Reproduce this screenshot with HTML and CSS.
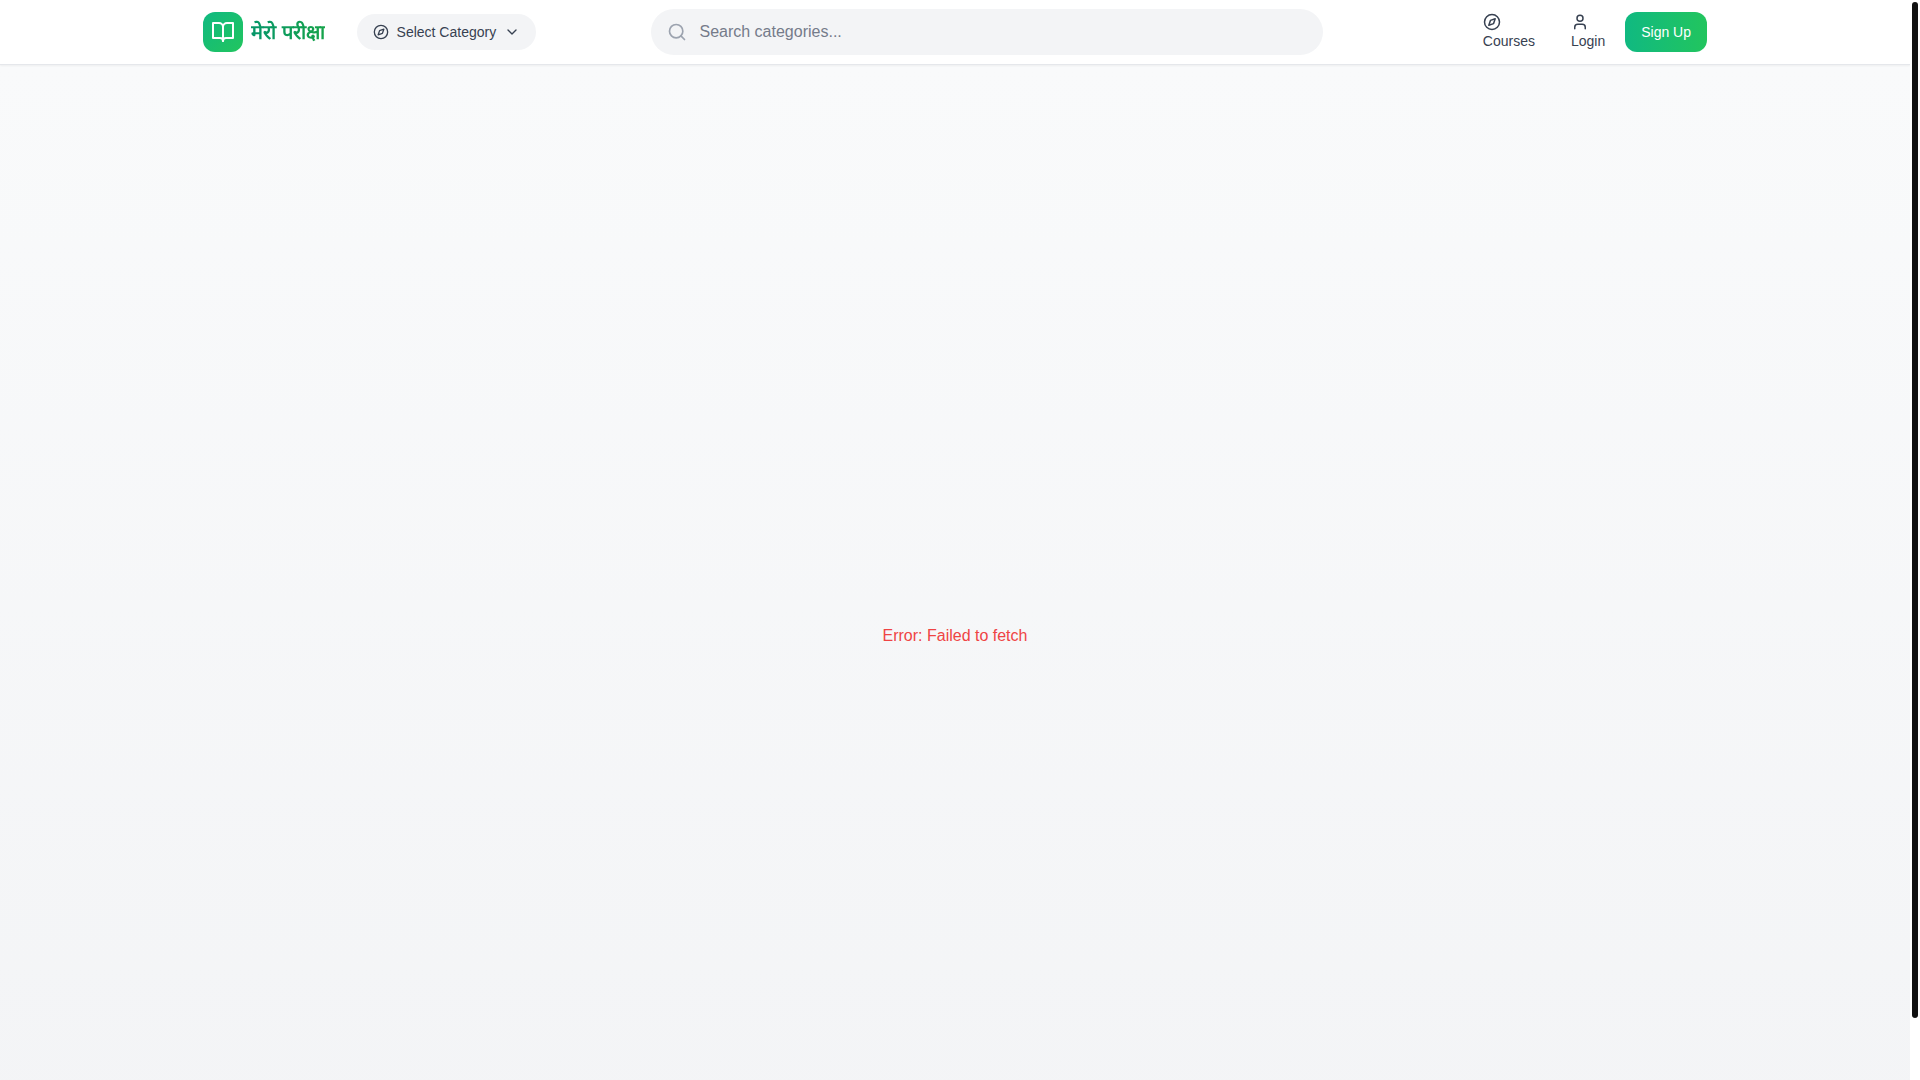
FILE: index.html
```html
<!DOCTYPE html>
<html lang="en">
<head>
<meta charset="utf-8">
<meta name="viewport" content="width=device-width, initial-scale=1">
<title>मेरो परीक्षा</title>
<link rel="stylesheet" href="styles.css">
</head>
<body>
<div class="page">
  <header class="header">
    <div class="header-inner">
      <a class="brand" href="#">
        <span class="brand-mark">
          <svg class="icon icon-lg" viewBox="0 0 24 24"><path d="M2 3h6a4 4 0 0 1 4 4v14a3 3 0 0 0-3-3H2z"/><path d="M22 3h-6a4 4 0 0 0-4 4v14a3 3 0 0 1 3-3h7z"/></svg>
        </span>
        <span class="brand-name" lang="ne">मेरो परीक्षा</span>
      </a>
      <button class="category" type="button">
        <svg class="icon icon-sm" viewBox="0 0 24 24"><circle cx="12" cy="12" r="10"/><path d="m16.24 7.76-2.12 6.36-6.36 2.12 2.12-6.36z"/></svg>
        Select Category
        <svg class="icon icon-sm" viewBox="0 0 24 24"><path d="m6 9 6 6 6-6"/></svg>
      </button>
      <form class="search" role="search">
        <label class="search-field">
          <svg class="icon search-icon" viewBox="0 0 24 24"><circle cx="11" cy="11" r="8"/><path d="m21 21-4.3-4.3"/></svg>
          <input class="search-input" type="text" placeholder="Search categories..." aria-label="Search categories">
        </label>
      </form>
      <nav class="nav">
        <a class="nav-link" href="#">
          <svg class="icon icon-md" viewBox="0 0 24 24"><circle cx="12" cy="12" r="10"/><path d="m16.24 7.76-2.12 6.36-6.36 2.12 2.12-6.36z"/></svg>
          Courses
        </a>
        <a class="nav-link" href="#">
          <svg class="icon icon-md" viewBox="0 0 24 24"><path d="M19 21v-2a4 4 0 0 0-4-4H9a4 4 0 0 0-4 4v2"/><circle cx="12" cy="7" r="4"/></svg>
          Login
        </a>
        <button class="signup" type="button">Sign Up</button>
      </nav>
    </div>
  </header>
  <main class="main">
    <p class="error" role="alert">Error: Failed to fetch</p>
  </main>
</div>
<div class="scrollbar" aria-hidden="true"><div class="scrollbar-thumb"></div></div>
</body>
</html>
```
FILE: styles.css
```css
* {
  box-sizing: border-box;
}

body {
  margin: 0;
  display: flex;
  height: 100vh;
  overflow: hidden;
  background: #fff;
  color: #374151;
  font-family: Arial, "Liberation Sans", sans-serif;
  font-size: 16px;
  line-height: 24px;
}

button,
input {
  border: 0;
  font: inherit;
}

a {
  color: inherit;
  text-decoration: none;
}

.page {
  flex: 1;
  min-width: 0;
  overflow: hidden;
}

.header {
  position: relative;
  background: #fff;
  border-bottom: 1px solid #e5e7eb;
  box-shadow: 0 1px 2px rgba(0, 0, 0, 0.05);
}

.header-inner {
  display: flex;
  align-items: center;
  max-width: 1536px;
  height: 64px;
  margin: 0 auto;
  padding: 0 16px;
}

.icon {
  display: block;
  flex: none;
  width: 20px;
  height: 20px;
  fill: none;
  stroke: currentColor;
  stroke-width: 2;
  stroke-linecap: round;
  stroke-linejoin: round;
}

.icon-sm {
  width: 16px;
  height: 16px;
}

.icon-md {
  width: 18px;
  height: 18px;
}

.icon-lg {
  width: 24px;
  height: 24px;
}

.brand {
  display: flex;
  align-items: center;
  gap: 8px;
  margin-right: 32px;
}

.brand-mark {
  padding: 8px;
  border-radius: 12px;
  background: linear-gradient(to bottom right, #10b981, #22c55e);
  color: #fff;
}

.brand-name {
  background: linear-gradient(to right, #059669, #16a34a);
  -webkit-background-clip: text;
  background-clip: text;
  color: transparent;
  font-size: 20px;
  font-weight: 700;
  line-height: 28px;
  white-space: nowrap;
}

.category {
  display: flex;
  align-items: center;
  gap: 8px;
  padding: 8px 16px;
  border-radius: 18px;
  background: #f3f4f6;
  color: #374151;
  font-size: 14px;
  line-height: 20px;
  white-space: nowrap;
}

.search {
  flex: 1;
  display: flex;
  justify-content: center;
  margin: 0 28px 0 0;
}

.search-field {
  position: relative;
  width: 100%;
  max-width: 672px;
}

.search-icon {
  position: absolute;
  top: 13px;
  left: 16px;
  color: #9ca3af;
}

.search-input {
  display: block;
  width: 100%;
  height: 46px;
  padding: 0 16px 0 48px;
  border-radius: 23px;
  background: #f3f4f6;
  color: #374151;
}

.search-input::placeholder {
  color: #757b8a;
}

.nav {
  display: flex;
  align-items: center;
  gap: 4px;
  font-size: 14px;
  line-height: 20px;
}

.nav-link {
  padding: 0 16px;
}

.signup {
  padding: 10px 16px;
  border-radius: 12px;
  background: linear-gradient(to right, #10b981, #22c55e);
  color: #fff;
  white-space: nowrap;
}

.main {
  display: flex;
  align-items: center;
  justify-content: center;
  height: 100vh;
  padding-top: 62px;
  background: linear-gradient(to bottom, #f9fafb, #f3f4f6);
}

.error {
  margin: 0;
  color: #ef4444;
}

.scrollbar {
  width: 10px;
  padding: 2px;
}

.scrollbar-thumb {
  height: 94.4%;
  border-radius: 3px;
  background: #111;
}
```
